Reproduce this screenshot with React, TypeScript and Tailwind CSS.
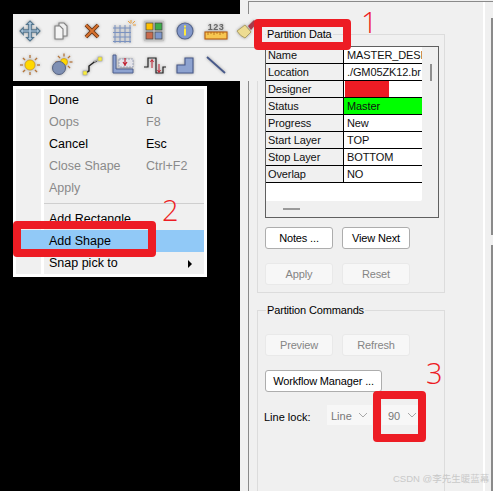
const ui = "font-['Liberation_Sans','Roboto',sans-serif]";

const shadow = "[filter:drop-shadow(0_0_1.5px_#9a9a9a)]";

function Ico({ children }: { children: React.ReactNode }) {
  return (
    <div className="w-[31px] flex items-center justify-center">
      <svg width="30" height="30" viewBox="0 0 30 30" className={shadow}>
        {children}
      </svg>
    </div>
  );
}

function Sun({ cx, cy, r }: { cx: number; cy: number; r: number }) {
  const rays = [0, 45, 90, 135, 180, 225, 270, 315];
  return (
    <g>
      {rays.map((a) => (
        <line key={a} x1={cx} y1={cy - r - 2} x2={cx} y2={cy - r - 5} stroke="#b5753a" strokeWidth="1.300" transform={`rotate(${a} ${cx} ${cy})`} />
      ))}
      <circle cx={cx} cy={cy} r={r} fill="#ffd800" stroke="#d09a20" strokeWidth="0.800" />
    </g>
  );
}

function ToolbarTop() {
  return (
    <div className="flex h-[33px] pl-px items-center">
      <Ico>
        <path d="M15 5l3.500 3.500h-2.200v5.400h5.400v-2.200L25 15l-3.300 3.500v-2.400h-5.400v5.400h2.200L15 25l-3.500-3.500h2.200v-5.400H8.300v2.400L5 15l3.300-3.300v2.200h5.400V8.500h-2.200z" fill="#b4cde2" stroke="#55778f" strokeWidth="1.100" />
      </Ico>
      <Ico>
        <path d="M13 7h5l3 3v10h-8z" fill="#eee" stroke="#808080" strokeWidth="1.100" />
        <path d="M9 10h5l3 3v10H9z" fill="#f4f4f4" stroke="#808080" strokeWidth="1.100" />
      </Ico>
      <Ico>
        <path d="M9 9l12 12M21 9L9 21" stroke="#6a3412" strokeWidth="3.800" />
        <path d="M9 9l12 12M21 9L9 21" stroke="#d8722e" strokeWidth="2" />
      </Ico>
      <Ico>
        <path d="M5 12h18M5 16.500h18M5 21h18M5 25.500h18M7 9v18M12 9v18M17 9v18M22 9v18" stroke="#7b92c0" strokeWidth="1" fill="none" />
        <path d="M23 4v3M27 5l-2.500 2.500M28 9h-3M20 5l2.500 2.500" stroke="#ee9a2b" strokeWidth="0.900" />
      </Ico>
      <Ico>
        <rect x="5" y="5" width="20" height="20" fill="#c4c4c4" />
        <rect x="7" y="7" width="7" height="7" fill="#ffc000" stroke="#444" strokeWidth="0.700" />
        <rect x="16" y="7" width="7" height="7" fill="#3fae4a" stroke="#444" strokeWidth="0.700" />
        <rect x="7" y="16" width="7" height="7" fill="#c96a4c" stroke="#444" strokeWidth="0.700" />
        <rect x="16" y="16" width="7" height="7" fill="#7f98cc" stroke="#444" strokeWidth="0.700" />
      </Ico>
      <Ico>
        <circle cx="15" cy="15" r="8" fill="#8298cb" stroke="#56668e" strokeWidth="1.100" />
        <rect x="14" y="9.500" width="2" height="2" fill="#ffe93b" />
        <rect x="14" y="12.500" width="2" height="7" fill="#ffe93b" />
      </Ico>
      <Ico>
        <text x="15" y="14" textAnchor="middle" fontSize="9" letterSpacing="0.500" fill="#666" fontFamily="Liberation Sans, sans-serif" fontWeight="700">123</text>
        <rect x="4" y="16" width="22" height="7" fill="#f7c650" stroke="#b85e10" strokeWidth="1.100" />
        <path d="M7 16v3M10 16v2M13 16v3M16 16v2M19 16v3M22 16v2" stroke="#a85a10" strokeWidth="0.700" />
      </Ico>
      <Ico>
        <path d="M5 15l8-6 6 7-6 6q-5-2-8-7z" fill="#eddc92" stroke="#a89a60" strokeWidth="0.900" />
        <path d="M16 10l6-6 3 3-6 7z" fill="#a83a4a" />
      </Ico>
    </div>
  );
}

function ToolbarBottom() {
  return (
    <div className="flex h-[33px] pl-px items-center">
      <Ico>
        <Sun cx={15} cy={15} r={5} />
      </Ico>
      <Ico>
        <Sun cx={18} cy={12} r={3.500} />
        <circle cx="13" cy="18" r="6.500" fill="#7f90b4" stroke="#566280" strokeWidth="1" />
      </Ico>
      <Ico>
        <path d="M8 23l4-2v-5l4-3 1-1 3-1" stroke="#222" strokeWidth="1.400" fill="none" />
        <path d="M17 11.500l4-1.500" stroke="#aaa" strokeWidth="1.400" />
        <rect x="6" y="21" width="4" height="4" fill="#f8ec3c" stroke="#999" strokeWidth="0.500" />
        <rect x="21" y="7" width="4" height="4" fill="#f8ec3c" stroke="#999" strokeWidth="0.500" />
      </Ico>
      <Ico>
        <path d="M5 5h3v14h17v4H5z" fill="#8ea3d0" stroke="#47598a" strokeWidth="0.900" />
        <rect x="11" y="9" width="14" height="8" fill="#e4e4ea" stroke="#8a93b0" strokeWidth="0.700" strokeDasharray="2 1" />
        <path d="M17 8v8M15 12l2 3 2-3" stroke="#c02030" strokeWidth="1.200" fill="none" />
      </Ico>
      <Ico>
        <path d="M5 17h4V8h8v15h7v-6h3" stroke="#222" strokeWidth="1.200" fill="none" />
        <path d="M13 18v-8M11.500 12l1.500-2.500 1.500 2.500" stroke="#c02030" strokeWidth="1" fill="none" />
        <path d="M20 14v8M18.500 20l1.500 2.500 1.500-2.500" stroke="#c02030" strokeWidth="1" fill="none" />
      </Ico>
      <Ico>
        <path d="M7 15h8V8h8v15H7z" fill="#8ea3d0" stroke="#47598a" strokeWidth="1.100" />
      </Ico>
      <Ico>
        <path d="M6 7l18 16" stroke="#47598a" strokeWidth="1.800" />
      </Ico>
    </div>
  );
}

function MenuItem({ label, keys, off, hot, arrow }: { label: string; keys?: string; off?: boolean; hot?: boolean; arrow?: boolean }) {
  return (
    <div className={`relative flex h-[22px] items-center pl-[33px] text-[12.5px] ${off ? "text-[#8a8a8a]" : "text-black"} ${hot ? "bg-[#91c9f7]" : ""}`}>
      <span className="w-[97px]">{label}</span>
      {keys && <span>{keys}</span>}
      {arrow && <span className="absolute right-[12px] top-[8px] border-y-[4px] border-l-[4px] border-y-transparent border-l-black" />}
    </div>
  );
}

function ContextMenu() {
  return (
    <div className={`absolute left-[13px] top-[86px] w-[194px] h-[191px] bg-white p-[3px] ${ui}`}>
      <div className="relative h-full bg-[#f0f0f0] flex flex-col">
        <div className="absolute left-[25px] top-0 bottom-0 w-[3px] bg-white" />
        <MenuItem label="Done" keys="d" />
        <MenuItem label="Oops" keys="F8" off />
        <MenuItem label="Cancel" keys="Esc" />
        <MenuItem label="Close Shape" keys="Ctrl+F2" off />
        <MenuItem label="Apply" off />
        <div className="ml-[28px] mt-[4px] mb-[4px] h-px bg-[#cfcfcf]" />
        <MenuItem label="Add Rectangle" />
        <MenuItem label="Add Shape" hot />
        <MenuItem label="Snap pick to" arrow />
      </div>
    </div>
  );
}

const rows = [
  ["Name", "MASTER_DESI"],
  ["Location", "./GM05ZK12.br"],
  ["Designer", ""],
  ["Status", "Master"],
  ["Progress", "New"],
  ["Start Layer", "TOP"],
  ["Stop Layer", "BOTTOM"],
  ["Overlap", "NO"],
];

function DataTable() {
  return (
    <div className="relative ml-[7px] mt-[11px] w-[174px] h-[172px] border border-[#606060] overflow-hidden">
      <div className="w-[156px] h-[154px] bg-white rounded-br-[2px] overflow-hidden">
        {rows.map(([k, v]) => (
          <div key={k} className="flex h-[17px] border-b border-black text-[11px] leading-[16px] tracking-[-0.1px] text-[#111]">
            <div className="w-[78px] border-r border-black bg-[#f0f0f0] pl-[2px] whitespace-nowrap overflow-hidden">{k}</div>
            <div className={`flex-1 pl-[3px] whitespace-nowrap overflow-hidden ${k === "Status" ? "bg-[#00ff00]" : "bg-white"}`}>
              {k === "Designer" ? <div className="-ml-[2px] w-[44px] h-[16px] bg-[#ed1c24]" /> : v}
            </div>
          </div>
        ))}
      </div>
      {/* table scrollbars */}
      <div className="absolute left-[164px] top-[17px] w-[2px] h-[17px] bg-[#8f8f8f]" />
      <div className="absolute left-[17px] top-[161px] w-[17px] h-[2px] bg-[#9a9a9a]" />
    </div>
  );
}

function Btn({ children, off, w = "w-[68px]" }: { children: React.ReactNode; off?: boolean; w?: string }) {
  return (
    <div className={`${w} h-[22px] rounded-[3px] border flex items-center justify-center text-[11px] tracking-[-0.15px] whitespace-nowrap ${off ? "border-[#e9e9e9] bg-[#f7f7f7] text-[#858585]" : "border-[#adadad] bg-white text-black"}`}>
      {children}
    </div>
  );
}

function Chevron() {
  return (
    <svg width="10" height="6" viewBox="0 0 10 6">
      <path d="M1 1l4 4 4-4" stroke="#a8a8a8" fill="none" />
    </svg>
  );
}

function Combo({ text, className }: { text: string; className: string }) {
  return (
    <div className={`h-[20px] bg-[#f7f7f7] flex items-center justify-between text-[11px] text-[#777] ${className}`}>
      <span className="pt-px">{text}</span>
      <Chevron />
    </div>
  );
}

function Group({ title, className, children }: { title: string; className: string; children: React.ReactNode }) {
  return (
    <div className={`relative w-[188px] border border-[#dcdcdc] ${className}`}>
      <span className="absolute left-[8px] -top-[9px] bg-[#f0f0f0] px-px text-[11px] tracking-[-0.15px] leading-[16px] text-black whitespace-nowrap">{title}</span>
      {children}
    </div>
  );
}

function Panel() {
  return (
    <div className={`w-[253px] h-full bg-[#f0f0f0] pt-px pl-2 ${ui}`}>
      <div className="flex h-full border-t border-l border-[#8a8a8a]">
        <div className="w-[234px] pl-2 pt-8 overflow-hidden">
          <Group title="Partition Data" className="h-[259px]">
            <DataTable />
            <div className="flex gap-[9px] ml-[7px] mt-[9px]">
              <Btn>Notes ...</Btn>
              <Btn>View Next</Btn>
            </div>
            <div className="flex gap-[9px] ml-[7px] mt-[14px]">
              <Btn off>Apply</Btn>
              <Btn off>Reset</Btn>
            </div>
          </Group>
          <Group title="Partition Commands" className="h-[200px] mt-[17px]">
            <div className="flex gap-[9px] ml-[7px] mt-[23px]">
              <Btn off>Preview</Btn>
              <Btn off>Refresh</Btn>
            </div>
            <div className="ml-[7px] mt-[14px]">
              <Btn w="w-[117px]">Workflow Manager ...</Btn>
            </div>
            <div className="flex items-center ml-[6px] mt-[13px] text-[11px] text-black">
              <span className="w-[63px] pt-[4px]">Line lock:</span>
              <Combo text="Line" className="w-[45px] pl-[4px] pr-[4px]" />
              <div className="w-[10px]" />
              <Combo text="90" className="w-[36px] pl-[6px] pr-px" />
            </div>
          </Group>
        </div>
        <div className="w-[2px] bg-white" />
        {/* right scrollbar */}
        <div className="flex-1 flex flex-col items-end pt-[16px]">
          <div className="w-[2px] h-[217px] bg-[#8a8a8a]" />
          <div className="w-[2px] flex-1 mt-[10px] bg-[#8a8a8a]" />
        </div>
      </div>
    </div>
  );
}

function Mark({ className }: { className: string }) {
  return <div className={`absolute rounded-[4px] border-[8px] border-[#ed1c24] ${className}`} />;
}

function Num({ className, children }: { className: string; children: React.ReactNode }) {
  return <span className={`absolute text-[29px] leading-none font-light text-[#ed1c24] font-['Open_Sans',sans-serif] ${className}`}>{children}</span>;
}

export default function App() {
  return (
    <div className="relative w-[493px] h-[491px] bg-black overflow-hidden flex justify-end">
      <Panel />

      {/* floating toolbar */}
      <div className="absolute left-[13px] top-[14px] w-[252px] h-[67px] bg-[#f0f0f0] flex flex-col">
        <ToolbarTop />
        <div className="h-px bg-[#bdbdbd]" />
        <ToolbarBottom />
      </div>

      <ContextMenu />

      {/* red annotations */}
      <Mark className="left-[254px] top-[19px] w-[97px] h-[31px]" />
      <Mark className="left-[13px] top-[221px] w-[143px] h-[36px]" />
      <Mark className="left-[373px] top-[391px] w-[53px] h-[51px]" />
      <Num className="left-[361px] top-[7px]">1</Num>
      <Num className="left-[162px] top-[195px]">2</Num>
      <Num className="left-[426px] top-[358px]">3</Num>

      <span className="absolute left-[393px] top-[472px] text-[9.5px] leading-[14px] text-[#c9c9c9] whitespace-nowrap font-['Liberation_Sans','Noto_Sans_CJK_SC',sans-serif]">CSDN @李先生暖蓝幕</span>
    </div>
  );
}
